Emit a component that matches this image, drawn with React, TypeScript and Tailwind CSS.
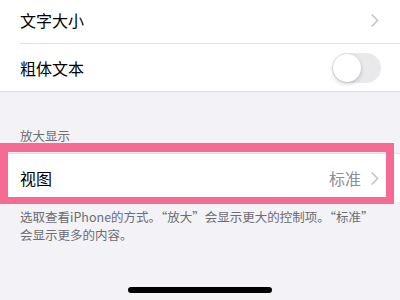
import React from "react";

function Chevron() {
  return (
    <svg width="8" height="13" viewBox="0 0 8 13" fill="none">
      <path d="M1.2 1 L6.6 6.5 L1.2 12" stroke="#c4c4c8" strokeWidth="1.7" strokeLinecap="round" strokeLinejoin="round" />
    </svg>
  );
}

export default function App() {
  return (
    <div
      className="relative w-[400px] h-[300px] overflow-hidden bg-[#f2f2f7]"
      style={{ fontFamily: '"Noto Sans CJK SC", "Noto Sans", sans-serif' }}
    >
      {/* top white group */}
      <div className="bg-white border-b border-[#dcdce0]">
        <div className="h-[43px] pb-[3px] pl-[20px] pr-[21px] flex items-center justify-between">
          <span className="text-[16px] text-black leading-none">文字大小</span>
          <Chevron />
        </div>
        <div className="ml-[20px] h-px bg-[#e0e0e4]" />
        <div className="h-[47px] pl-[20px] pr-[19px] flex items-center justify-between">
          <span className="text-[16px] text-black leading-none">粗体文本</span>
          <div className="w-[49px] h-[30px] rounded-full bg-[#e9e9eb] p-[1px] flex items-center">
            <div className="w-[28px] h-[28px] rounded-full bg-white shadow-[0_2px_4px_rgba(0,0,0,0.18),0_0_0_0.5px_rgba(0,0,0,0.06)]" />
          </div>
        </div>
      </div>

      {/* section header */}
      <div className="h-[61px] pl-[20px] flex items-end pb-[8px]">
        <span className="text-[12.5px] leading-[18px] text-[#6d6d72]">放大显示</span>
      </div>

      {/* view row */}
      <div className="bg-white border-t border-[#e0e0e4] h-[49px] pl-[20px] pr-[21px] flex items-center justify-between">
        <span className="text-[16px] text-black leading-none">视图</span>
        <div className="flex items-center gap-[10px]">
          <span className="text-[16px] text-[#8e8e93] leading-none">标准</span>
          <Chevron />
        </div>
      </div>

      {/* footer */}
      <div className="pl-[20px] pr-[10px] pt-[6px] text-[12.5px] leading-[18px] text-[#6d6d72]">
        <div>选取查看iPhone的方式。“放大”会显示更大的控制项。“标准”</div>
        <div>会显示更多的内容。</div>
      </div>

      {/* pink annotation */}
      <div className="absolute left-0 top-[143px] w-[394px] h-[61px] border-[8px] border-t-[9px] border-b-[7px] border-[#f66b93]" />

      {/* home indicator */}
      <div className="absolute left-[128px] top-[287px] w-[144px] h-[6px] rounded-full bg-black" />
    </div>
  );
}
